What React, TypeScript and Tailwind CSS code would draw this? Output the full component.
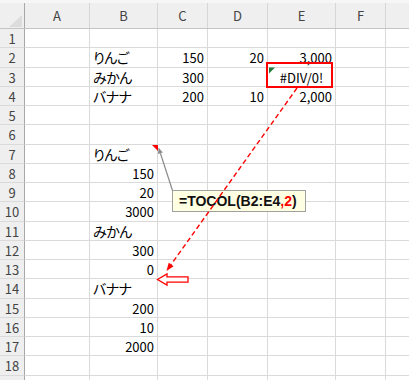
import React from "react";

type Cell = { text: string; align: "left" | "right" | "center"; jp?: boolean };

const COLS = ["A", "B", "C", "D", "E", "F", "G"];

// row -> column -> cell
const data: Record<number, Record<string, Cell>> = {
  2: {
    B: { text: "りんご", align: "left", jp: true },
    C: { text: "150", align: "right" },
    D: { text: "20", align: "right" },
    E: { text: "3,000", align: "right" },
  },
  3: {
    B: { text: "みかん", align: "left", jp: true },
    C: { text: "300", align: "right" },
    E: { text: "#DIV/0!", align: "center" },
  },
  4: {
    B: { text: "バナナ", align: "left", jp: true },
    C: { text: "200", align: "right" },
    D: { text: "10", align: "right" },
    E: { text: "2,000", align: "right" },
  },
  7: { B: { text: "りんご", align: "left", jp: true } },
  8: { B: { text: "150", align: "right" } },
  9: { B: { text: "20", align: "right" } },
  10: { B: { text: "3000", align: "right" } },
  11: { B: { text: "みかん", align: "left", jp: true } },
  12: { B: { text: "300", align: "right" } },
  13: { B: { text: "0", align: "right" } },
  14: { B: { text: "バナナ", align: "left", jp: true } },
  15: { B: { text: "200", align: "right" } },
  16: { B: { text: "10", align: "right" } },
  17: { B: { text: "2000", align: "right" } },
};

const rows = Array.from({ length: 19 }, (_, i) => i + 1);

const gridCols = "grid grid-cols-[25px_65px_68px_50px_60px_68px_50px_60px]";

function CellView({ cell }: { cell?: Cell }) {
  const align =
    cell?.align === "right"
      ? "justify-end pr-[3px]"
      : cell?.align === "center"
        ? "justify-center"
        : "justify-start pl-[3px]";
  return (
    <div
      className={`flex items-center ${align} border-r border-b border-[#dadada] overflow-visible whitespace-nowrap text-black leading-none`}
    >
      {cell && (
        <span
          className={
            cell.jp
              ? "text-[14px] [font-feature-settings:'palt'] tracking-[-0.5px]"
              : "text-[13px] pt-[1px]"
          }
        >
          {cell.text}
        </span>
      )}
    </div>
  );
}

export default function App() {
  return (
    <div className="relative w-[409px] h-[380px] overflow-hidden bg-white font-['Noto_Sans_CJK_JP',sans-serif]">
      <div className="h-[3px] bg-[#f6f6f6]" />
      {/* column headers */}
      <div className={`${gridCols} h-[26px] bg-[#efefef] border-b border-[#c4c4c4]`}>
        <div className="relative border-r border-[#a8a8a8]">
          <svg className="absolute left-0 top-0" width="25" height="26">
            <polygon points="22,12 22,24 9,24" fill="#dcdcdc" />
          </svg>
        </div>
        {COLS.map((c) => (
          <div
            key={c}
            className="flex items-center justify-center border-r border-[#d6d6d6] text-[13px] text-[#444] leading-none"
          >
            {c}
          </div>
        ))}
      </div>
      {/* body */}
      {rows.map((r) => (
        <div key={r} className={`${gridCols} h-[19.25px]`}>
          <div className="flex items-center justify-center bg-[#efefef] border-r border-b border-r-[#a8a8a8] border-b-[#dadada] text-[13px] text-[#444] leading-none pt-[1px]">
            {r}
          </div>
          {COLS.map((c) => (
            <CellView key={c} cell={data[r]?.[c]} />
          ))}
        </div>
      ))}

      {/* error box around E3 */}
      <div className="absolute left-[266px] top-[62px] w-[67px] h-[26px] border-2 border-[#ff0000]" />

      {/* comment callout */}
      <div className="absolute left-[172px] top-[190px] w-[134px] h-[22px] bg-[#ffffe1] border border-[#a0a0a0] flex items-center pl-[6px] font-['Liberation_Sans',Arial,sans-serif] font-bold text-[14px] text-[#111] leading-none whitespace-nowrap">
        =TOCOL(B2:E4<span className="text-[#ff0000]">,2</span>)
      </div>

      <svg
        className="absolute left-0 top-0 pointer-events-none"
        width="409"
        height="380"
      >
        {/* error indicator in E3 */}
        <polygon points="269,67.5 275,67.5 269,73.5" fill="#1f7a3a" />
        {/* comment indicator in B7 */}
        <polygon points="152,145 158,145 158,151" fill="#ff0000" />
        {/* comment connector */}
        <line x1="172.5" y1="190.5" x2="160.4" y2="153.2" stroke="#8a8a8a" strokeWidth="1.2" />
        <polygon points="158.5,147.5 162.8,152.4 158,154" fill="#8a8a8a" />
        {/* dashed red arrow */}
        <line
          x1="297"
          y1="88"
          x2="171.1"
          y2="264.5"
          stroke="#ff0000"
          strokeWidth="1.4"
          strokeDasharray="5 3"
        />
        <polygon points="166.5,271 173.6,266.2 168.7,262.7" fill="#ff0000" />
        {/* hollow block arrow */}
        <polygon
          points="157.5,279.5 167,274 167,276.8 188,276.8 188,282.2 167,282.2 167,285"
          fill="#ffffff"
          stroke="#ff0000"
          strokeWidth="1.3"
          strokeLinejoin="miter"
        />
      </svg>
    </div>
  );
}
